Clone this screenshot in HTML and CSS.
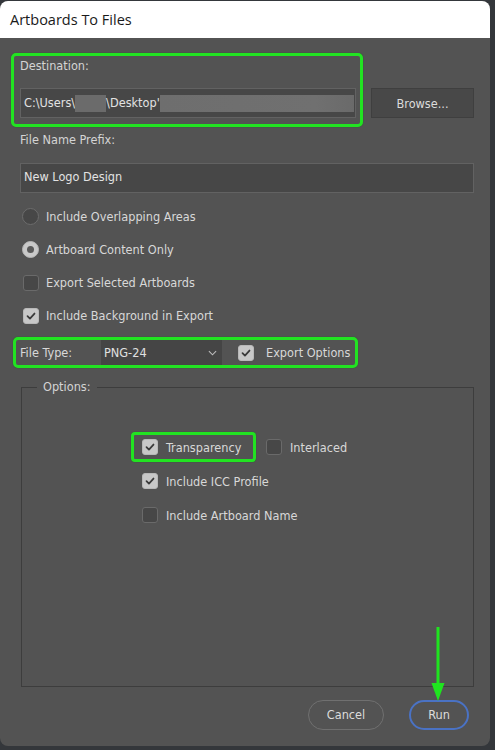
FILE: index.html
```html
<!DOCTYPE html>
<html>
<head>
<meta charset="utf-8">
<title>Artboards To Files</title>
<link rel="stylesheet" href="styles.css">
</head>
<body>
<div class="window">
  <div class="titlebar">Artboards To Files</div>
  <div class="content">
    <div class="dest-row">
      <div class="hl dest">
        <div class="label">Destination:</div>
        <div class="field path">C:\Users\<span class="blur b1"></span>\Desktop'<span class="blur b2"></span></div>
      </div>
      <div class="btn browse">Browse...</div>
    </div>
    <div class="label prefix-label">File Name Prefix:</div>
    <div class="field prefix">New Logo Design</div>
    <div class="opt-list">
      <div class="opt"><span class="radio"></span>Include Overlapping Areas</div>
      <div class="opt"><span class="radio on"></span>Artboard Content Only</div>
      <div class="opt"><span class="check"></span>Export Selected Artboards</div>
      <div class="opt"><span class="check on"><svg viewBox="0 0 16 16"><path d="M4 8.2 L6.8 11 L12 5.2"/></svg></span>Include Background in Export</div>
    </div>
    <div class="hl filetype">
      <span class="ft-label">File Type:</span>
      <div class="select">PNG-24<svg class="chev" viewBox="0 0 10 6"><path d="M1 1 L5 5 L9 1"/></svg></div>
      <span class="check on"><svg viewBox="0 0 16 16"><path d="M4 8.2 L6.8 11 L12 5.2"/></svg></span>
      <span class="ft-opt">Export Options</span>
    </div>
    <fieldset class="group">
      <legend>Options:</legend>
      <div class="group-rows">
        <div class="grow">
          <div class="hl trans"><span class="check on"><svg viewBox="0 0 16 16"><path d="M4 8.2 L6.8 11 L12 5.2"/></svg></span>Transparency</div>
          <div class="opt inter"><span class="check"></span>Interlaced</div>
        </div>
        <div class="opt grow2"><span class="check on"><svg viewBox="0 0 16 16"><path d="M4 8.2 L6.8 11 L12 5.2"/></svg></span>Include ICC Profile</div>
        <div class="opt grow2"><span class="check"></span>Include Artboard Name</div>
      </div>
    </fieldset>
    <div class="actions">
      <div class="btn pill cancel">Cancel</div>
      <div class="btn pill run">Run</div>
    </div>
  </div>
  <svg class="arrow" viewBox="0 0 16 76"><path class="shaft" d="M8 0 V60"/><path class="head" d="M1.5 56 L14.5 56 L8 74 Z"/></svg>
</div>
</body>
</html>
```
FILE: styles.css
```css
* { box-sizing: border-box; }
html, body { margin: 0; padding: 0; }
body {
  width: 495px;
  height: 750px;
  background: #34373b;
  overflow: hidden;
  font-family: "DejaVu Sans Condensed", "DejaVu Sans", sans-serif;
  font-size: 12.6px;
  color: #d8d8d8;
}
.window {
  position: relative;
  width: 490px;
  height: 745px;
  margin-top: 1px;
  background: #535353;
  border-radius: 8px 8px 8px 8px;
  overflow: hidden;
}
.titlebar {
  height: 37px;
  background: #ffffff;
  color: #1a1a1a;
  font-family: "Open Sans", "Noto Sans", sans-serif;
  font-size: 14.5px;
  line-height: 37px;
  padding-left: 10px;
}
.content {
  padding: 15px 16px 0 20px;
}
.label { line-height: 16px; color: #d4d4d4; }
.hl {
  border: 3px solid #22e322;
  border-radius: 5px;
  box-shadow: 0 0 1px #0a6a0a;
}
.dest-row { display: flex; align-items: flex-end; }
.dest {
  width: 352px;
  height: 74px;
  margin-left: -9px;
  padding: 2px 6px 0 6px;
}
.field {
  height: 30px;
  background: #474747;
  border: 1px solid #626262;
  line-height: 25px;
  padding-left: 3px;
  color: #e2e2e2;
  white-space: nowrap;
  overflow: hidden;
}
.path { margin-top: 14px; width: 336px; display: flex; align-items: center; line-height: 28px; }
.blur { display: inline-block; height: 17px; background: #6b6b6b; }
.b1 { width: 31px; }
.b2 { width: 194px; background: linear-gradient(90deg, #6e6e6e, #707070 80%, #6a6a6a); }
.btn {
  text-align: center;
  color: #dcdcdc;
}
.browse {
  width: 103px;
  height: 30px;
  line-height: 30px;
  margin-left: 8px;
  margin-bottom: 9px;
  background: #484848;
  border: 1px solid #3f3f3f;
}
.prefix-label { margin-top: 5px; }
.prefix { margin-top: 15px; }
.opt-list { margin-top: 7px; }
.opt {
  display: flex;
  align-items: center;
  height: 33px;
  color: #d8d8d8;
}
.radio {
  width: 17px;
  height: 17px;
  border-radius: 50%;
  background: #474747;
  border: 1px solid #6c6c6c;
  margin-left: 2px;
  margin-right: 7px;
  display: inline-flex;
  align-items: center;
  justify-content: center;
  flex: none;
}
.radio.on { background: #c9c9c9; border-color: #b5b5b5; }
.radio.on::after {
  content: "";
  width: 7px;
  height: 7px;
  border-radius: 50%;
  background: #5a5a5a;
}
.check {
  width: 16px;
  height: 16px;
  border-radius: 3px;
  background: #474747;
  border: 1px solid #6a6a6a;
  margin-left: 3px;
  margin-right: 7px;
  display: inline-flex;
  flex: none;
}
.check.on { background: #c8c8c8; border-color: #b8b8b8; }
.check svg { width: 14px; height: 14px; }
.check path { fill: none; stroke: #3a3a3a; stroke-width: 2; stroke-linecap: round; stroke-linejoin: round; }
.filetype {
  margin-top: 5px;
  margin-left: -7px;
  width: 345px;
  height: 31px;
  display: flex;
  align-items: center;
  padding-left: 4px;
}
.ft-label { width: 81px; }
.select {
  width: 121px;
  height: 25px;
  background: #454545;
  display: flex;
  align-items: center;
  padding-left: 3px;
  color: #e0e0e0;
  margin-right: 16px;
  position: relative;
}
.chev { width: 9px; height: 6px; margin-left: auto; margin-right: 5px; }
.chev path { fill: none; stroke: #bdbdbd; stroke-width: 1.2; }
.filetype .check { margin-left: 0; margin-right: 12px; }
.group {
  margin: 11px 0 0 1px;
  padding: 0;
  border: 1px solid #3d3d3d;
  height: 308px;
  min-width: 0;
}
.group legend {
  margin-left: 15px;
  padding: 0 6px;
  line-height: 16px;
  color: #d4d4d4;
}
.group-rows {
  margin-top: 37px;
  padding-left: 120px;
  display: flex;
  flex-direction: column;
  gap: 4px;
}
.grow { display: flex; align-items: center; height: 30px; margin-left: -11px; }
.trans {
  width: 125px;
  height: 30px;
  display: flex;
  align-items: center;
  padding: 0 0 0 8px;
  border-radius: 4px;
}
.trans .check { margin-left: 0; margin-right: 8px; }
.inter { margin-left: 10px; height: 30px; }
.inter .check { margin-left: 0; margin-right: 8px; }
.grow2 { height: 30px; }
.grow2 .check { margin-left: 0; margin-right: 8px; }
.actions {
  display: flex;
  justify-content: flex-end;
  gap: 25px;
  margin-top: 13px;
  padding-right: 5px;
}
.pill {
  height: 30px;
  line-height: 28px;
  border-radius: 15px;
  border: 1px solid #707070;
}
.cancel { width: 76px; }
.run { width: 60px; border: 2px solid #4a72c4; line-height: 26px; }
.arrow {
  position: absolute;
  left: 430px;
  top: 626px;
  width: 16px;
  height: 76px;
}
.arrow .shaft { stroke: #1fe41f; stroke-width: 3; fill: none; }
.arrow .head { fill: #1fe41f; }
```
